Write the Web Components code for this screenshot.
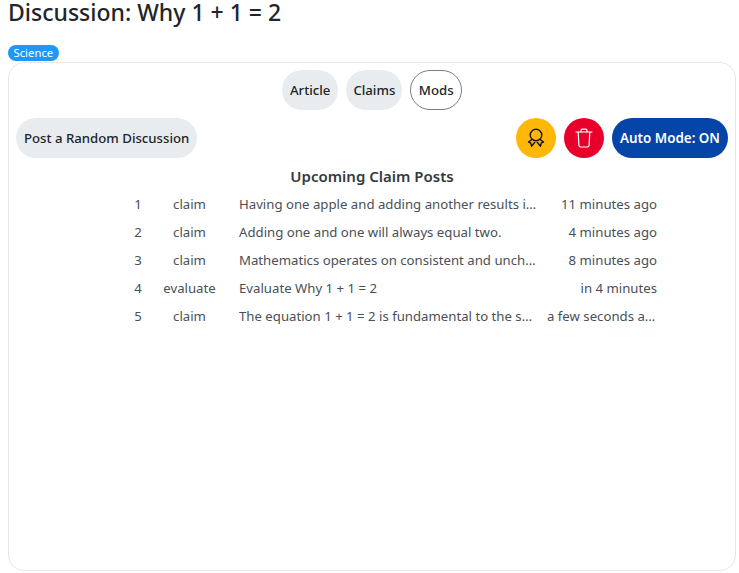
<!DOCTYPE html>
<html lang="en"><head><meta charset="utf-8"><title>Discussion</title>
<style>
html,body{margin:0;padding:0;background:#fff}
body{font-family:"Noto Sans","Open Sans",sans-serif;color:#212529;overflow:hidden}
</style></head><body>
<discussion-page>
  <span slot="title">Discussion: Why 1 + 1 = 2</span>
  <tag-badge slot="tag">Science</tag-badge>
  <pill-button slot="tabs">Article</pill-button>
  <pill-button slot="tabs" style="--px:7px">Claims</pill-button>
  <pill-button slot="tabs" style="--px:7.5px" active>Mods</pill-button>
  <pill-button slot="left">Post a Random Discussion</pill-button>
  <round-button slot="right" kind="award"></round-button>
  <round-button slot="right" kind="trash"></round-button>
  <pill-button slot="right" primary>Auto Mode: ON</pill-button>
  <queue-row slot="rows" n="1" type="claim" text="Having one apple and adding another results i…" time="11 minutes ago"></queue-row>
  <queue-row slot="rows" n="2" type="claim" text="Adding one and one will always equal two." time="4 minutes ago"></queue-row>
  <queue-row slot="rows" n="3" type="claim" text="Mathematics operates on consistent and unch…" time="8 minutes ago"></queue-row>
  <queue-row slot="rows" n="4" type="evaluate" text="Evaluate Why 1 + 1 = 2" time="in 4 minutes"></queue-row>
  <queue-row slot="rows" n="5" type="claim" text="The equation 1 + 1 = 2 is fundamental to the s…" time="a few seconds a…" style="--pr:2px"></queue-row>
</discussion-page>
<script>
const def=(name,html,init)=>customElements.define(name,class extends HTMLElement{
  constructor(){super();this.attachShadow({mode:'open'}).innerHTML=html;}
  connectedCallback(){init&&init(this);}
});
def('discussion-page',`<style>
:host{height:573px;box-sizing:border-box;padding:0 3px 2px 8px;display:flex;flex-direction:column}
h1{margin:0;height:45px;font:500 23px/25px "Noto Sans",sans-serif;color:#212529;white-space:nowrap}
.tag{height:17px;display:flex;align-items:flex-start}
.card{flex:1;border:1px solid #e6e7e9;border-radius:16px;padding:7px 7px 0;display:flex;flex-direction:column;gap:8px}
.tabs{display:flex;justify-content:center;gap:8px}
.bar{display:flex;justify-content:space-between}
.right{display:flex;gap:8px}
h2{margin:0;font:600 15px/20px "Noto Sans",sans-serif;text-align:center;color:#343a40}
.sec{display:flex;flex-direction:column;align-items:center}
.rows{display:flex;flex-direction:column;margin-top:4px;padding-left:38px}
</style>
<h1><slot name="title"></slot></h1>
<div class="tag"><slot name="tag"></slot></div>
<div class="card">
<div class="tabs"><slot name="tabs"></slot></div>
<div class="bar"><slot name="left"></slot><div class="right"><slot name="right"></slot></div></div>
<div class="sec"><h2>Upcoming Claim Posts</h2><div class="rows"><slot name="rows"></slot></div></div>
</div>`);
def('tag-badge',`<style>
:host{display:inline-block;background:#2196f3;color:#fff;border-radius:9px;font:400 11.3px/16px "Noto Sans",sans-serif;padding:0 5.5px;height:16px}
</style><slot></slot>`);
def('pill-button',`<style>
:host{display:inline-flex;align-items:center;height:40px;box-sizing:border-box;padding:0 var(--px,8px);border-radius:20px;background:#e9ecef;color:#212529;font:500 13.2px/20px "Noto Sans",sans-serif;white-space:nowrap}
:host([active]){background:#fff;border:1px solid #7d7d7d;color:#212529}
:host([primary]){background:#0645a8;color:#fff;font-weight:600;font-size:13.4px}
</style><slot></slot>`);
const icons={
award:`<svg width="24" height="24" viewBox="0 0 24 24" fill="none" stroke="#1a1408" stroke-width="1.4" stroke-linejoin="round" stroke-linecap="round"><circle cx="12" cy="9" r="5.800"/><path d="M8 13.400 4.500 16l2.200.9.800 3.300 3.300-3.900"/><path d="M16 13.400 19.500 16l-2.200.9-.8 3.300-3.300-3.900"/></svg>`,
trash:`<svg width="24" height="24" viewBox="0 0 24 24" fill="none" stroke="#fff" stroke-width="1.2" stroke-linejoin="round" stroke-linecap="round"><path d="M4 6h16"/><path d="M9 6V4.500C9 3.700 9.500 3.200 10.200 3.200h3.600c.7 0 1.200.5 1.200 1.300V6"/><path d="M6.200 6l.7 13.400c.1 1 .9 1.600 1.800 1.600h6.600c.9 0 1.700-.6 1.800-1.600L17.800 6"/></svg>`};
def('round-button',`<style>
:host{display:inline-flex;align-items:center;justify-content:center;width:40px;height:40px;border-radius:50%}
:host([kind=award]){background:#ffb80a}
:host([kind=trash]){background:#e8002b}
svg{display:block}
</style><span id="i" style="display:contents"></span>`,el=>{el.shadowRoot.getElementById('i').innerHTML=icons[el.getAttribute('kind')];});
def('queue-row',`<style>
:host{display:grid;grid-template-columns:26px 77px 310px 119px;height:28px;align-items:center;font:400 13.2px/20px "Noto Sans",sans-serif;color:#495057}
div{white-space:nowrap;min-width:0}
.n,.t{text-align:center}
.x{padding-left:11px}
.d{text-align:right;padding-left:9px;padding-right:var(--pr,0)}
</style><div class="n"></div><div class="t"></div><div class="x"></div><div class="d"></div>`,el=>{
  const s=el.shadowRoot;
  s.querySelector('.n').textContent=el.getAttribute('n');
  s.querySelector('.t').textContent=el.getAttribute('type');
  s.querySelector('.x').textContent=el.getAttribute('text');
  s.querySelector('.d').textContent=el.getAttribute('time');
});
</script>
</body></html>
